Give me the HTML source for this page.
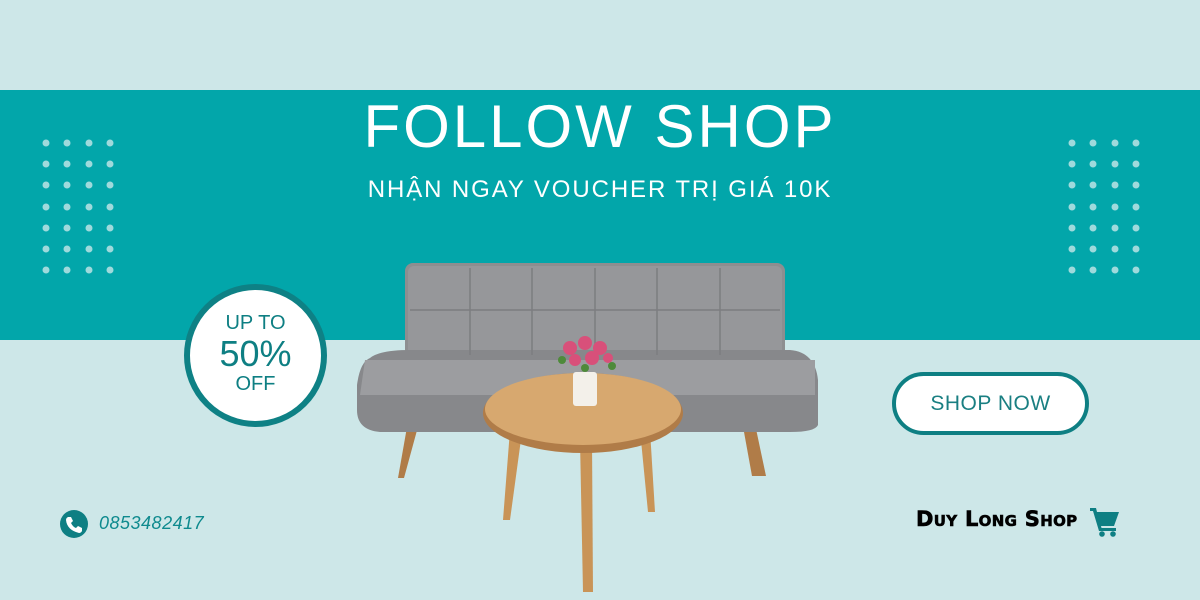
<!DOCTYPE html>
<html><head><meta charset="utf-8"><style>
*{margin:0;padding:0;box-sizing:border-box}
body{width:1200px;height:600px;overflow:hidden;background:#cde7e8;font-family:"Liberation Sans",sans-serif;position:relative}
.band{position:absolute;left:0;top:90px;width:1200px;height:250px;background:#02a6aa}
.t1{position:absolute;top:92px;left:0;width:1200px;text-align:center;color:#fff;font-size:60px;letter-spacing:3px}
.t2{position:absolute;top:176px;left:0;width:1200px;text-align:center;color:#fff;font-size:24px;letter-spacing:1.9px}
.badge{position:absolute;left:184px;top:284px;width:143px;height:143px;border-radius:50%;background:#fff;border:6px solid #0e8185;color:#0e7f83;text-align:center}
.shop{position:absolute;left:892px;top:372px;width:197px;height:63px;border-radius:32px;background:#fff;border:4px solid #0e7f83;color:#1a7f82;font-size:21px;text-align:center;line-height:55px;letter-spacing:.5px}
</style></head><body>
<div class="band"></div>
<svg width="1200" height="600" style="position:absolute;left:0;top:0">
<g fill="#9fdadc">
<g id="d">
<circle cx="46" cy="143" r="3.5"/><circle cx="67" cy="143" r="3.5"/><circle cx="89" cy="143" r="3.5"/><circle cx="110" cy="143" r="3.5"/>
</g>
<use href="#d" y="21"/><use href="#d" y="42"/><use href="#d" y="64"/><use href="#d" y="85"/><use href="#d" y="106"/><use href="#d" y="127"/>
<use href="#d" x="1026"/><use href="#d" x="1026" y="21"/><use href="#d" x="1026" y="42"/><use href="#d" x="1026" y="64"/><use href="#d" x="1026" y="85"/><use href="#d" x="1026" y="106"/><use href="#d" x="1026" y="127"/>
</g>
<path d="M410 410 L398 478 L404 478 L422 412Z" fill="#b07c48"/>
<path d="M740 410 L752 476 L766 476 L752 410Z" fill="#b07c48"/>
<rect x="405" y="263" width="380" height="100" rx="8" fill="#8d8e90"/>
<rect x="408" y="266" width="374" height="92" rx="6" fill="#96979a"/>
<path d="M370 358 Q380 350 410 350 L790 350 Q815 352 818 380 L818 425 Q815 432 790 432 L380 432 Q357 430 357 410 L357 385 Q360 362 370 358Z" fill="#87888b"/>
<path d="M365 360 L815 360 L815 395 L360 395Z" fill="#9c9da0"/>
<g stroke="#7c7d80" stroke-width="1.5">
<line x1="470" y1="268" x2="470" y2="355"/><line x1="532" y1="268" x2="532" y2="355"/><line x1="595" y1="268" x2="595" y2="355"/><line x1="657" y1="268" x2="657" y2="355"/><line x1="720" y1="268" x2="720" y2="355"/>
<line x1="410" y1="310" x2="780" y2="310"/>
</g>
<path d="M510 430 L503 520 L510 520 L522 432Z" fill="#c99457"/>
<path d="M640 430 L648 512 L655 512 L650 430Z" fill="#c99457"/>
<path d="M580 440 L583 592 L593 592 L592 440Z" fill="#c99457"/>
<ellipse cx="583" cy="413" rx="100" ry="40" fill="#b07c48"/>
<ellipse cx="583" cy="409" rx="98" ry="36" fill="#d7a86f"/>
<rect x="573" y="372" width="24" height="34" rx="3" fill="#f3f0ea"/>
<g fill="#d8507a"><circle cx="570" cy="348" r="7"/><circle cx="585" cy="343" r="7"/><circle cx="600" cy="348" r="7"/><circle cx="592" cy="358" r="7"/><circle cx="575" cy="360" r="6"/><circle cx="608" cy="358" r="5"/></g>
<g fill="#4e8a3a"><circle cx="562" cy="360" r="4"/><circle cx="612" cy="366" r="4"/><circle cx="585" cy="368" r="4"/></g>
<circle cx="74" cy="524" r="14" fill="#0e7f83"/>
<path d="M68 517 l3 0 l2 4 l-2 2 q2 4 5 5 l2 -2 l4 2 l0 3 q-1 2 -3 2 q-12 -3 -13 -13 q0 -2 2 -3z" fill="#fff"/>
<g fill="#0e7f83">
<path d="M1090 508 L1096 508 L1097 512 L1119 512 L1114 526 L1101 526 L1101.5 528 L1116 528 L1116 531 L1099 531 L1093 511 L1090 511Z"/>
<circle cx="1102" cy="534" r="2.8"/><circle cx="1113" cy="534" r="2.8"/></g>
</svg>
<div class="t1">FOLLOW SHOP</div>
<div class="t2">NHẬN NGAY VOUCHER TRỊ GIÁ 10K</div>
<div class="badge"><div style="font-size:20px;margin-top:22px">UP TO</div><div style="font-size:36px;line-height:38px">50%</div><div style="font-size:20px">OFF</div></div>
<div class="shop">SHOP NOW</div>
<div style="position:absolute;left:99px;top:513px;color:#0e8a8e;font-size:18px;font-style:italic;letter-spacing:.5px">0853482417</div>
<div style="position:absolute;left:916px;top:507px;font-size:21px;font-weight:bold;color:#000;font-variant:small-caps;font-family:'DejaVu Sans',sans-serif;letter-spacing:.3px;-webkit-text-stroke:.6px #000">Duy Long Shop</div>
</body></html>
